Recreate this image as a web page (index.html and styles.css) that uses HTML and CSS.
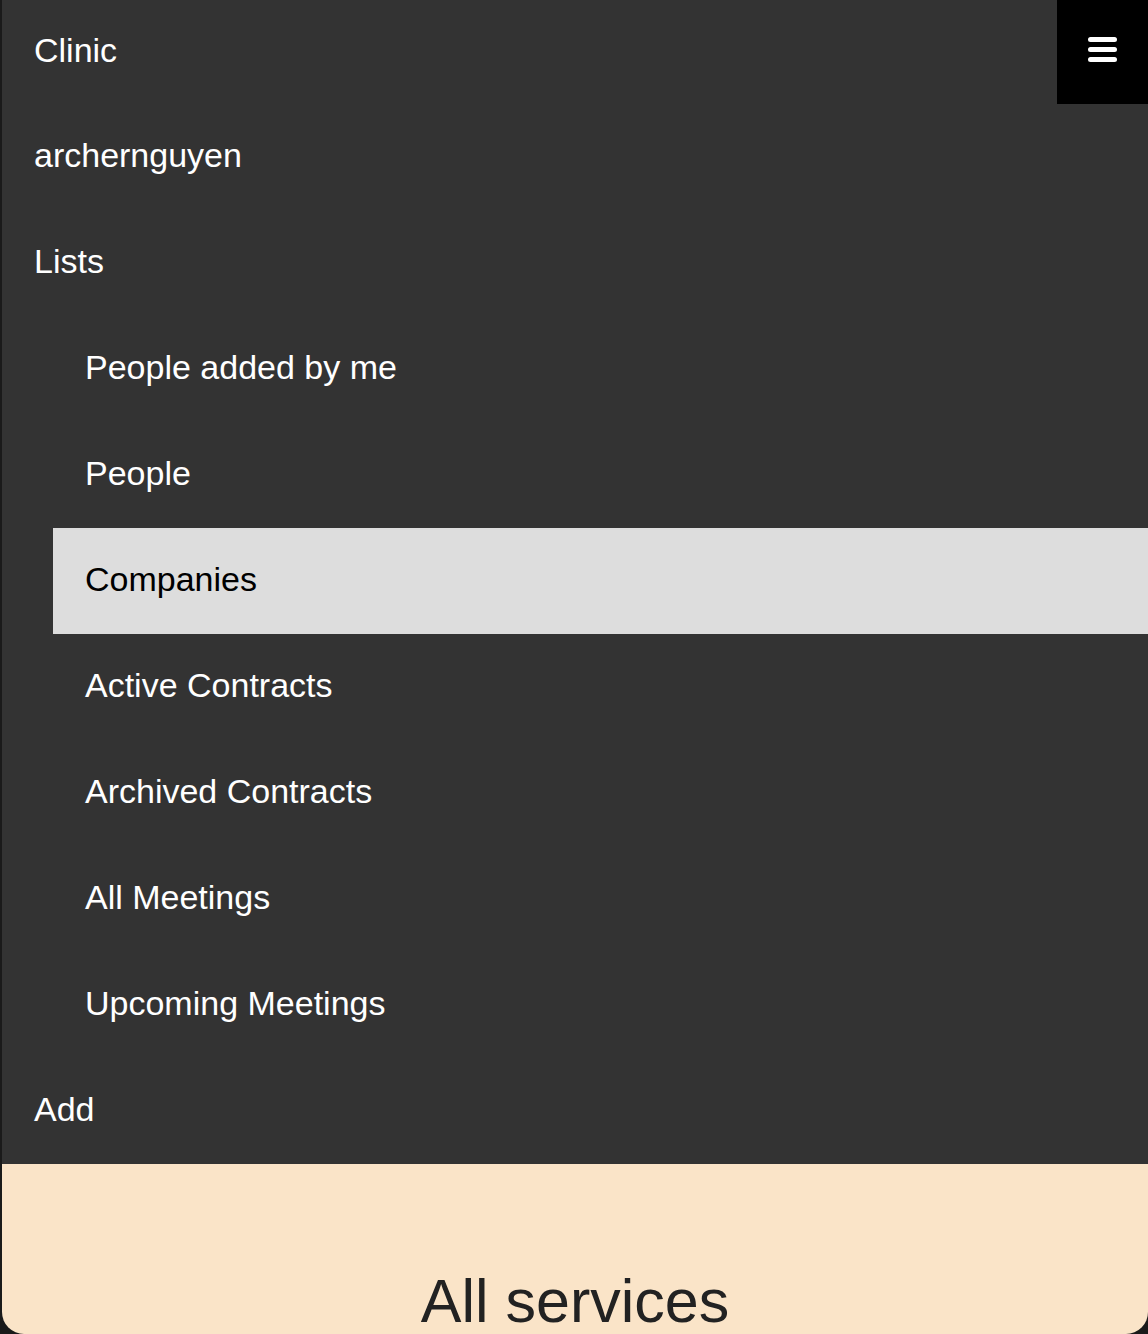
FILE: index.html
```html
<!DOCTYPE html>
<html lang="en">
<head>
<meta charset="utf-8">
<title>Clinic</title>
<link rel="stylesheet" href="styles.css">
</head>
<body>
<div class="window">
  <nav class="menu">
    <ul class="menu-list">
      <li class="item item-first">Clinic</li>
      <li class="item">archernguyen</li>
      <li class="group">
        <div class="item">Lists</div>
        <ul class="sub-list">
          <li class="item">People added by me</li>
          <li class="item">People</li>
          <li class="item active">Companies</li>
          <li class="item">Active Contracts</li>
          <li class="item">Archived Contracts</li>
          <li class="item">All Meetings</li>
          <li class="item">Upcoming Meetings</li>
        </ul>
      </li>
      <li class="item">Add</li>
    </ul>
    <button class="burger" aria-label="Menu">
      <svg width="29" height="25" viewBox="0 0 29 25" aria-hidden="true">
        <rect x="0" y="0" width="29" height="5" rx="2.5" fill="#fff"/>
        <rect x="0" y="10" width="29" height="5" rx="2.5" fill="#fff"/>
        <rect x="0" y="20" width="29" height="5" rx="2.5" fill="#fff"/>
      </svg>
    </button>
  </nav>
  <main class="content">
    <h1 class="title">All services</h1>
  </main>
</div>
</body>
</html>
```

FILE: styles.css
```css
html, body {
  margin: 0;
  padding: 0;
}

body {
  background: #1a1a1a;
  font-family: "Liberation Sans", Arial, Helvetica, sans-serif;
  height: 1334px;
  overflow: hidden;
}

.window {
  margin-left: 2px;
  height: 1334px;
  background: #fae4c8;
  border-bottom-left-radius: 22px;
  border-bottom-right-radius: 22px;
  overflow: hidden;
  display: flex;
  flex-direction: column;
}

.menu {
  position: relative;
  background: #333333;
}

.menu-list,
.sub-list {
  list-style: none;
  margin: 0;
  padding: 0;
}

.sub-list {
  margin-left: 51px;
}

.item {
  height: 106px;
  display: flex;
  align-items: center;
  padding: 0 32px 3px;
  box-sizing: border-box;
  color: #ffffff;
  font-size: 34px;
}

.item-first {
  height: 104px;
}

.item.active {
  background: #dddddd;
  color: #000000;
}

.burger {
  position: absolute;
  top: 0;
  right: 0;
  width: 91px;
  height: 104px;
  background: #000000;
  border: 0;
  padding: 37px 0 0;
  margin: 0;
  display: flex;
  justify-content: center;
  align-items: flex-start;
  cursor: pointer;
}

.burger svg {
  display: block;
}

.content {
  flex: 1;
  padding-top: 102px;
}

.title {
  margin: 0;
  text-align: center;
  font-weight: normal;
  font-size: 61px;
  color: #222222;
}
```
